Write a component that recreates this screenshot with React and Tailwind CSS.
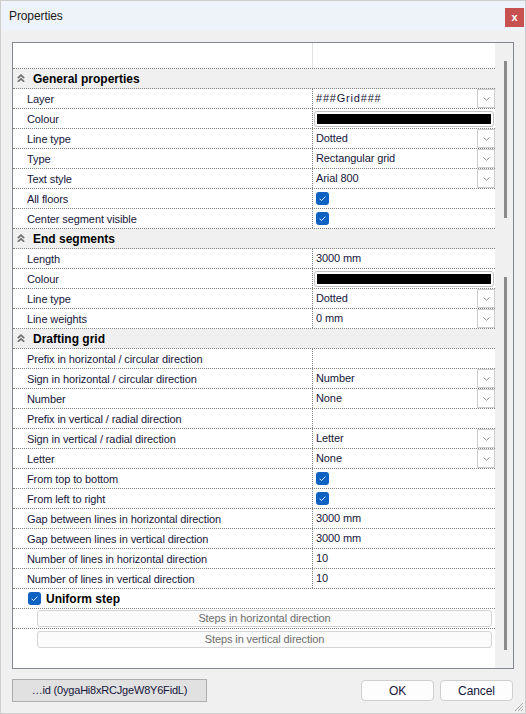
import React from "react";

const DOT = "border-dotted border-[#808080]";

function ChevronDown() {
  return (
    <svg width="9" height="6" viewBox="0 0 9 6" fill="none">
      <path d="M1.5 1.5 L4.5 4.3 L7.5 1.5" stroke="#8a8a8a" strokeWidth="1" />
    </svg>
  );
}

function DoubleUp() {
  return (
    <svg width="8" height="8" viewBox="0 0 8 8" fill="none">
      <path d="M0.8 4.2 L4 1.2 L7.2 4.2" stroke="#6e6e6e" strokeWidth="1.7" />
      <path d="M0.8 7.8 L4 4.8 L7.2 7.8" stroke="#6e6e6e" strokeWidth="1.7" />
    </svg>
  );
}

function Check() {
  return (
    <div className="w-[13px] h-[13px] rounded-[3px] bg-[#0f62c2] flex items-center justify-center">
      <svg width="13" height="13" viewBox="0 0 13 13" fill="none">
        <path d="M3.6 6.8 L5.6 8.6 L9.4 4.6" stroke="#dfe9f7" strokeWidth="1" />
      </svg>
    </div>
  );
}

function Value({ v }) {
  if (!v) return null;
  if (v.t === "select")
    return (
      <div className="flex items-start justify-between h-full">
        <span className={`pl-[3px] leading-[18px] whitespace-nowrap ${v.wide ? "tracking-[0.8px]" : ""}`}>{v.v}</span>
        <div className="w-[18px] h-[19px] border border-[#cdcdcd] bg-white flex items-center justify-center">
          <ChevronDown />
        </div>
      </div>
    );
  if (v.t === "color")
    return (
      <div className="pl-[1px] pr-[1px] pt-[2px]">
        <div className="h-[16px] border border-[#c2c2c2] rounded-[3px] p-[2px] bg-white">
          <div className="h-full bg-black" />
        </div>
      </div>
    );
  if (v.t === "check")
    return (
      <div className="pl-[3px] pt-[3px]">
        <Check />
      </div>
    );
  return <span className="pl-[3px] leading-[18px] whitespace-nowrap block">{v.v}</span>;
}

function PropRow({ label, v }) {
  return (
    <div className={`flex h-[20px] border-b ${DOT}`}>
      <div className={`w-[300px] shrink-0 border-r ${DOT} pl-[14px] pt-[2px] leading-[17px] whitespace-nowrap`}>
        {label}
      </div>
      <div className="flex-1 min-w-0">
        <Value v={v} />
      </div>
    </div>
  );
}

function Header({ title }) {
  return (
    <div className={`flex items-start h-[20px] bg-[#f0f0f0] border-b ${DOT}`}>
      <div className="ml-[4px] mt-[5px]">
        <DoubleUp />
      </div>
      <span className="ml-[8px] pt-[1px] leading-[18px] text-[12px] font-bold tracking-[0px] text-black">
        {title}
      </span>
    </div>
  );
}

const sel = (v, wide) => ({ t: "select", v, wide });
const txt = (v) => ({ t: "text", v });
const color = { t: "color" };
const check = { t: "check" };

const sections = [
  {
    title: "General properties",
    rows: [
      ["Layer", sel("###Grid###", true)],
      ["Colour", color],
      ["Line type", sel("Dotted")],
      ["Type", sel("Rectangular grid")],
      ["Text style", sel("Arial 800")],
      ["All floors", check],
      ["Center segment visible", check],
    ],
  },
  {
    title: "End segments",
    rows: [
      ["Length", txt("3000 mm")],
      ["Colour", color],
      ["Line type", sel("Dotted")],
      ["Line weights", sel("0 mm")],
    ],
  },
  {
    title: "Drafting grid",
    rows: [
      ["Prefix in horizontal / circular direction", null],
      ["Sign in horizontal / circular direction", sel("Number")],
      ["Number", sel("None")],
      ["Prefix in vertical / radial direction", null],
      ["Sign in vertical / radial direction", sel("Letter")],
      ["Letter", sel("None")],
      ["From top to bottom", check],
      ["From left to right", check],
      ["Gap between lines in horizontal direction", txt("3000 mm")],
      ["Gap between lines in vertical direction", txt("3000 mm")],
      ["Number of lines in horizontal direction", txt("10")],
      ["Number of lines in vertical direction", txt("10")],
    ],
  },
];

export default function App() {
  return (
    <div className="relative w-[526px] h-[714px] bg-[#f0f0f0] border border-[#cdcdcd] flex flex-col font-['Liberation_Sans',Arial,sans-serif] text-[11px] tracking-[-0.1px] text-[#16163a] overflow-hidden">
      {/* title bar */}
      <div className="h-[30px] shrink-0 bg-[#eef3f9] flex items-start justify-between">
        <span className="pl-[8px] leading-[30px] text-[12px] text-[#1a1a1a]">Properties</span>
        <div className="mt-[7px] mr-[1px] w-[19px] h-[19px] bg-[#c75050] flex items-center justify-center text-white text-[11px] font-bold leading-none">
          x
        </div>
      </div>

      {/* panel */}
      <div className="mx-[11px] mt-[11px] w-[502px] h-[627px] shrink-0 border border-[#828790] flex">
        <div className="w-[482px] shrink-0 bg-white flex flex-col">
          <div className={`flex h-[26px] shrink-0 border-b ${DOT}`}>
            <div className="w-[300px] border-r border-[#e2e2e2]" />
          </div>
          {sections.map((s) => (
            <React.Fragment key={s.title}>
              <Header title={s.title} />
              {s.rows.map(([l, v], i) => (
                <PropRow key={s.title + i} label={l} v={v} />
              ))}
            </React.Fragment>
          ))}
          <div className={`flex items-start h-[20px] border-b ${DOT}`}>
            <div className="ml-[15px] mt-[3px]">
              <Check />
            </div>
            <span className="ml-[5px] pt-[1px] leading-[18px] text-[12px] font-bold tracking-[0px] text-black">
              Uniform step
            </span>
          </div>
          <div className={`h-[20px] border-b ${DOT} pt-[1px]`}>
            <div className="ml-[24px] mr-[3px] h-[17px] border border-[#d4d4d4] rounded-[3px] bg-[#fbfbfb] text-center text-[#6d6d6d] leading-[15px]">
              Steps in horizontal direction
            </div>
          </div>
          <div className="h-[20px] pt-[2px]">
            <div className="ml-[24px] mr-[3px] h-[17px] border border-[#d4d4d4] rounded-[3px] bg-[#fbfbfb] text-center text-[#6d6d6d] leading-[15px]">
              Steps in vertical direction
            </div>
          </div>
        </div>
        {/* scrollbar */}
        <div className="w-[18px] shrink-0 bg-[#f0f0f0] flex flex-col items-center pt-[18px]">
          <div className="w-[3px] h-[157px] bg-[#8a8a8a] ml-[2px]" />
          <div className="w-[3px] h-[59px]" />
          <div className="w-[3px] h-[373px] bg-[#8a8a8a] ml-[2px]" />
        </div>
      </div>

      {/* footer */}
      <div className="mt-[10px] pl-[11px] pr-[12px] flex items-start">
        <div className="w-[195px] h-[23px] border border-[#adadad] bg-[#e1e1e1] flex items-center justify-center text-[11px] tracking-[-0.2px] text-[#16163a]">
          …id (0ygaHi8xRCJgeW8Y6FidL)
        </div>
        <div className="flex-1" />
        <div className="mt-[1px] w-[73px] h-[21px] border border-[#cfcfcf] rounded-[4px] bg-[#fdfdfd] flex items-center justify-center text-[12px] text-[#16163a]">
          OK
        </div>
        <div className="ml-[6px] mt-[1px] w-[73px] h-[21px] border border-[#cfcfcf] rounded-[4px] bg-[#fdfdfd] flex items-center justify-center text-[12px] text-[#16163a]">
          Cancel
        </div>
      </div>

      {/* resize grip */}
      <svg className="absolute right-[1px] bottom-[1px]" width="12" height="12" viewBox="0 0 12 12">
        <path d="M11 3 L3 11 M11 6 L6 11 M11 9 L9 11" stroke="#a8a8a8" strokeWidth="1" />
      </svg>
    </div>
  );
}
